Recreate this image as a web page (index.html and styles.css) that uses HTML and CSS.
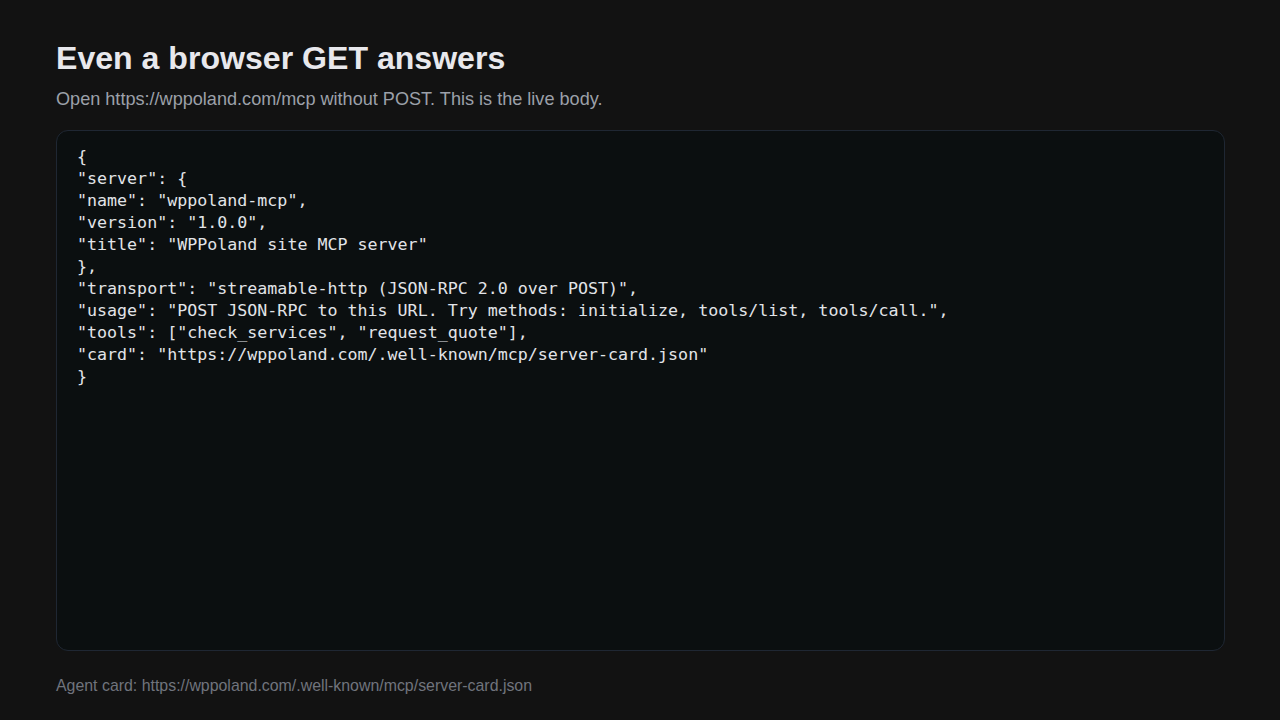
FILE: index.html
```html
<!DOCTYPE html>
<html lang="en">
<head>
<meta charset="utf-8">
<title>Even a browser GET answers</title>
<link rel="stylesheet" href="styles.css">
</head>
<body>
<main class="page">
  <h1 class="title">Even a browser GET answers</h1>
  <p class="subtitle">Open https://wppoland.com/mcp without POST. This is the live body.</p>
  <pre class="code">{
"server": {
"name": "wppoland-mcp",
"version": "1.0.0",
"title": "WPPoland site MCP server"
},
"transport": "streamable-http (JSON-RPC 2.0 over POST)",
"usage": "POST JSON-RPC to this URL. Try methods: initialize, tools/list, tools/call.",
"tools": ["check_services", "request_quote"],
"card": "https://wppoland.com/.well-known/mcp/server-card.json"
}</pre>
  <p class="footer">Agent card: https://wppoland.com/.well-known/mcp/server-card.json</p>
</main>
</body>
</html>
```
FILE: styles.css
```css
html, body {
  margin: 0;
  padding: 0;
  background: #121212;
}
.page {
  box-sizing: border-box;
  width: 1280px;
  height: 720px;
  padding: 40px 55px 0 56px;
  display: flex;
  flex-direction: column;
  font-family: "Liberation Sans", Arial, sans-serif;
}
.title {
  margin: 0;
  font-size: 32.1px;
  line-height: 36px;
  font-weight: 700;
  color: #e8e8ec;
}
.subtitle {
  margin: 12px 0 0 0;
  font-size: 18.1px;
  line-height: 22px;
  color: #9ca0a9;
}
.code {
  margin: 20px 0 0 0;
  height: 521px;
  box-sizing: border-box;
  padding: 15px 20px;
  background: #0b0f10;
  border: 1px solid #1f2733;
  border-radius: 12px;
  font-family: "DejaVu Sans Mono", monospace;
  font-size: 16.65px;
  line-height: 22px;
  color: #e2e4e8;
  white-space: pre;
}
.footer {
  margin: 25px 0 0 0;
  font-size: 15.9px;
  line-height: 20px;
  color: #70747d;
}
```
